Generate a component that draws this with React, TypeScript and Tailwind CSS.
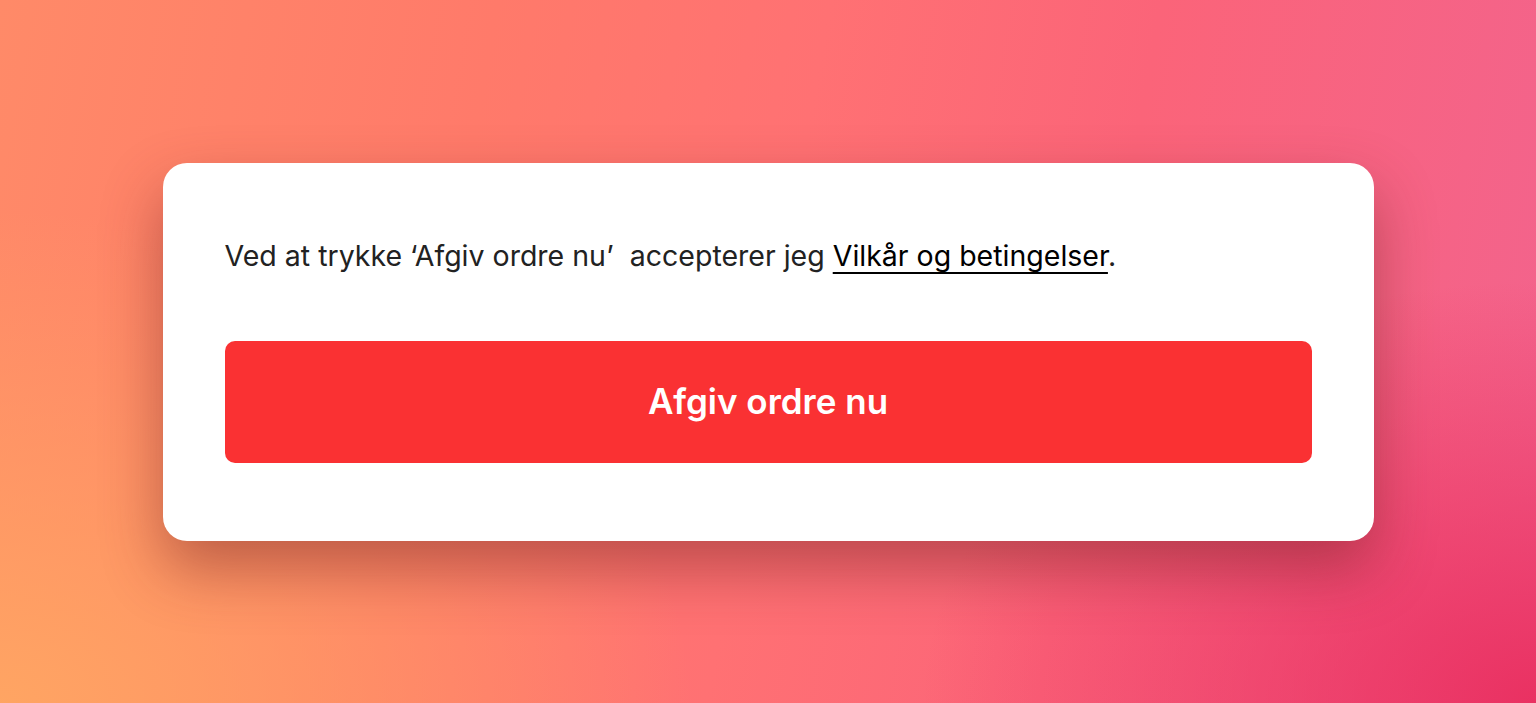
import React from 'react';

const App: React.FC = () => {
  return (
    <div
      className="w-[1536px] h-[703px] flex items-center justify-center overflow-hidden bg-[radial-gradient(ellipse_40%_60%_at_100%_100%,rgba(232,40,90,0.85),rgba(232,40,90,0)),radial-gradient(ellipse_45%_70%_at_0%_100%,rgba(255,168,98,0.9),rgba(255,168,98,0)),linear-gradient(100deg,#ff8a68_0%,#ff7a6a_30%,#ff7173_50%,#fb6479_70%,#f2638e_100%)]"
      style={{ fontFamily: 'Inter, "Noto Sans", sans-serif' }}
    >
      <div className="w-[1211px] h-[378px] bg-white rounded-[24px] px-[62px] pt-[73px] shadow-[0_28px_60px_rgba(110,30,30,0.45)]">
        <p className="text-[28.5px] leading-[40px] text-[#222]">
          Ved at trykke ‘Afgiv ordre nu’&nbsp; accepterer jeg{' '}
          <a
            href="#"
            className="text-black underline underline-offset-[6px] decoration-[2px] [text-decoration-skip-ink:none]"
          >
            Vilkår og betingelser
          </a>
          .
        </p>
        <button className="mt-[65px] w-full h-[122px] rounded-[10px] bg-[#fa3133] text-white text-[35px] font-semibold">
          Afgiv ordre nu
        </button>
      </div>
    </div>
  );
};

export default App;
